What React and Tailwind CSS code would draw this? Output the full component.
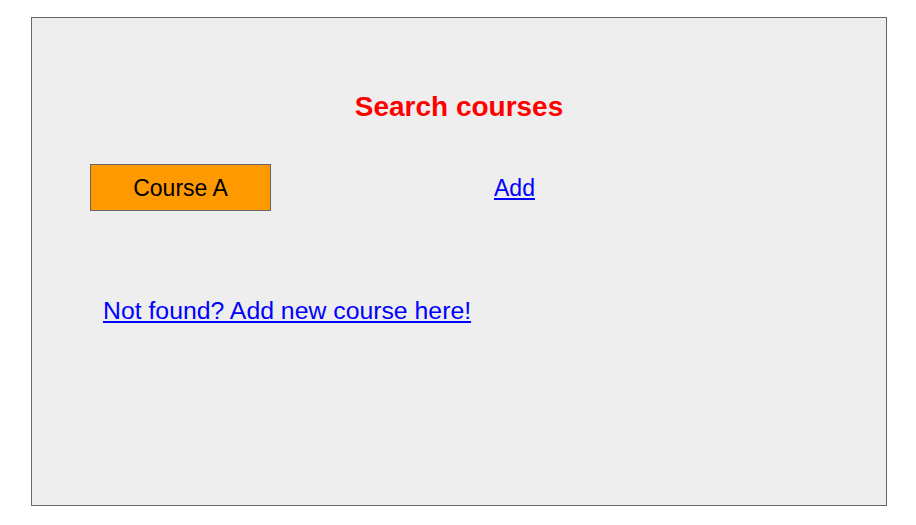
import React from 'react';

const App = () => {
  return (
    <div className="w-[916px] h-[525px] bg-white font-['Liberation_Sans',Arial,sans-serif]">
      <div className="ml-[31px] pt-[17px]">
        <div className="w-[856px] h-[489px] border border-[#666666] bg-[#eeeeee] flex flex-col">
          {/* Title */}
          <h1 className="mt-[73px] text-center text-[28px] leading-[32px] font-bold text-[#ff0000]">
            Search courses
          </h1>

          {/* Course row */}
          <div className="mt-[41px] flex items-center">
            <div className="ml-[58px] w-[181px] h-[47px] border border-[#666666] bg-[#ff9900] flex items-center justify-center text-[23px] leading-[26px] text-black">
              Course A
            </div>
            <a href="#" className="ml-[223px] text-[23px] leading-[26px] text-[#0000ff] underline">
              Add
            </a>
          </div>

          {/* Not found link */}
          <a href="#" className="mt-[85px] ml-[71px] self-start text-[24.8px] leading-[29px] text-[#0000ff] underline">
            Not found? Add new course here!
          </a>
        </div>
      </div>
    </div>
  );
};

export default App;
